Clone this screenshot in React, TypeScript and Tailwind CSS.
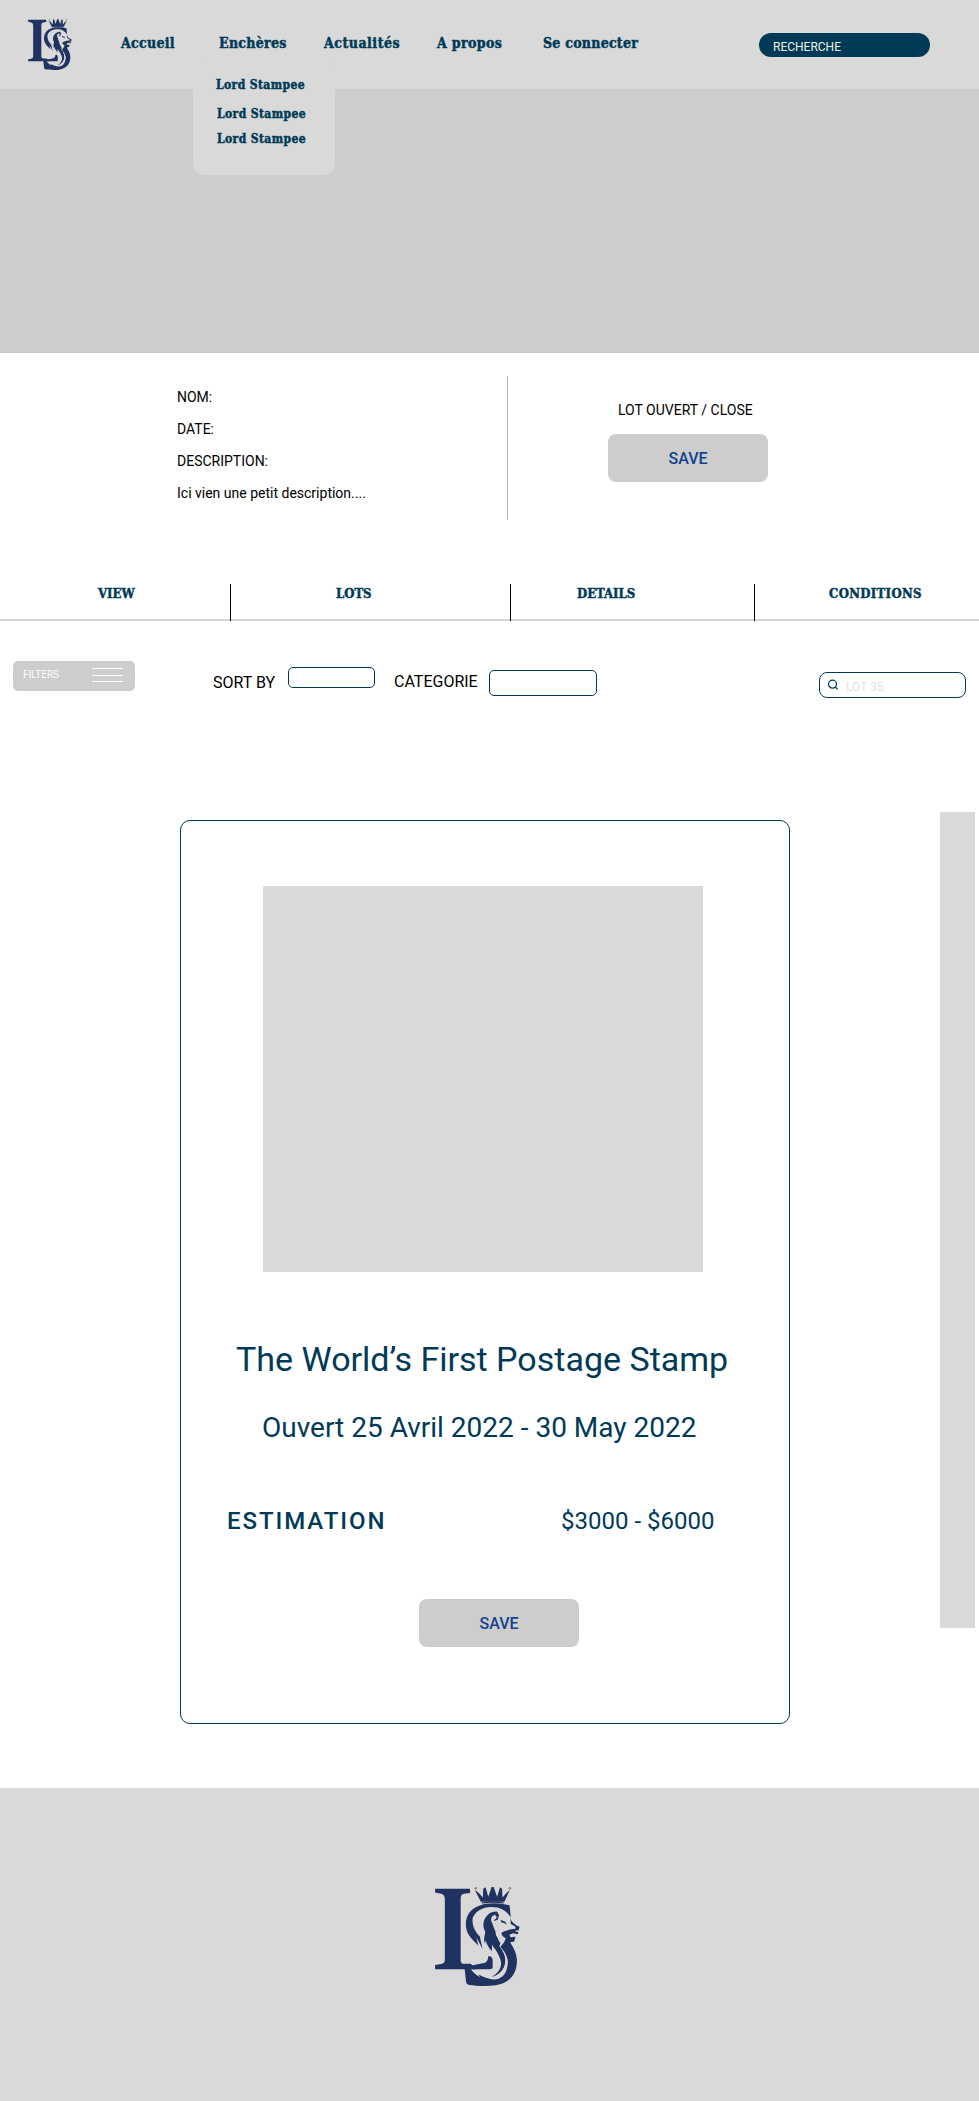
import React from "react";

const display =
  "font-['DejaVu_Serif_Condensed','DejaVu_Serif',serif] [font-stretch:condensed] font-bold text-[#003a57] whitespace-nowrap [-webkit-text-stroke:0.45px_#003a57]";

function Logo({ className }: { className: string }) {
  return (
    <svg viewBox="0 0 252 294" className={className} aria-label="Lord Stampee">
      <g fill="#20325f">
        <path d="M0 5H102Q104 5 104 8V18L86 20Q76 21 76 34V218Q76 228 86 228H106Q116 241 126 244H0V232L18 229Q29 227 29 216V36Q29 23 18 20L0 16Z" />
        <path d="M118 9L130 18L142 31L143 5L150 1L158 29L168 0H174L184 29L193 1L199 5L200 31L212 18L222 9L206 44H136Z" />
        <path d="M138 46Q171 39 204 46V49Q171 44 138 49Z" />
        <path d="M225 90L221 54L205 51C160 43 120 52 102 76C87 97 88 128 104 148C112 159 121 166 128 174L123 150L141 184L133 147C119 133 108 113 112 91C122 67 150 54 186 61C203 66 216 76 225 90Z" />
        <path d="M145 101C151 85 164 72 184 73L190 84L186 97L175 101L179 82C165 87 164 98 170 108C174 124 181 130 181 144C187 150 188 160 194 166L191 177C210 199 214 219 204 239C195 257 181 263 169 267C191 253 199 236 195 219C190 202 181 187 174 180L170 171L168 191C158 177 153 170 150 158L148 168C143 154 148 145 149 133C143 122 142 113 145 101Z" />
        <path d="M195 98L209 103L213 112L205 107L196 105Z" />
        <path d="M223 85C224 103 232 107 242 114L251 118L248 129H238L240 133L247 134L246 140L232 137L221 142L224 149L239 148L235 162L223 164C229 176 242 191 243 217C244 257 222 286 180 292C154 295 122 294 99 290C92 288 92 281 91 272L88 245C82 236 90 230 101 231C107 250 118 259 134 268L129 260C151 272 169 277 187 273C208 266 216 246 215 223C214 202 205 189 194 178L205 164L210 153C198 146 193 137 202 133L222 126L239 124L238 117L225 110Z" />
        <path d="M158 206Q170 204 171 218V241Q164 245 157 244H109Q106 238 106 234Q126 230 146 226Q157 223 158 206Z" />
      </g>
      <g fill="#d9d9d9">
        <path d="M170 94C172 83 180 83 183 89L181 94L174 98Z" />
        <path d="M190 259Q213 241 208 211Q206 196 199 188Q228 218 208 246Q201 257 190 259Z" />
      </g>
      <g fill="#b98c5b">
        <circle cx="121" cy="4" r="4" />
        <circle cx="222" cy="4" r="4" />
      </g>
    </svg>
  );
}

function Header() {
  return (
    <header className="relative z-10 flex h-[89px] items-start bg-[#d9d9d9]">
      <Logo className="ml-7 mt-[19px] h-[51px] w-[44px] shrink-0" />
      <nav className={`${display} flex pt-[31px] text-[14px] leading-6`}>
        <a className="ml-[49px] w-[98px] tracking-[0.3px]">Accueil</a>
        <a className="w-[105px] tracking-[0.3px]">Enchères</a>
        <a className="w-[113px] tracking-[0.5px]">Actualités</a>
        <a className="w-[106px] tracking-[0.35px]">A propos</a>
        <a className="w-[110px] tracking-[0.25px]">Se connecter</a>
      </nav>
      <div className="ml-[106px] mt-[33px] flex h-[24px] w-[171px] items-center rounded-full bg-[#003a57] pl-[14px] pt-[3px] text-[12px] text-[#f3f0e2]">
        RECHERCHE
      </div>
      <div
        className={`${display} absolute left-[193px] top-[60px] h-[115px] w-[142px] rounded-[10px] bg-[#d9d9d9] pl-[23px] pt-[15px] text-[12px] leading-[20px] tracking-[0.4px]`}
      >
        <p className="h-[29px]">Lord Stampee</p>
        <p className="h-[25px] pl-px">Lord Stampee</p>
        <p className="pl-px">Lord Stampee</p>
      </div>
    </header>
  );
}

function SaveButton({ className }: { className: string }) {
  return (
    <button
      className={`${className} h-[48px] w-[160px] rounded-lg bg-[#cdcdcd] pt-[2px] text-[16px] font-medium text-[#12438c]`}
    >
      SAVE
    </button>
  );
}

function LotSummary() {
  return (
    <section className="flex h-[231px] pt-[23px]">
      <div className="flex h-[144px] w-[508px] flex-col border-r border-[#b5b5b5] pl-[177px] pt-[5px] text-[14px] leading-8 text-black">
        <p>NOM:</p>
        <p>DATE:</p>
        <p>DESCRIPTION:</p>
        <p>Ici vien une petit description....</p>
      </div>
      <div className="ml-[100px] flex w-[160px] flex-col pt-[23px]">
        <p className="ml-[10px] whitespace-nowrap text-[14px] leading-[22px] text-black">LOT OUVERT / CLOSE</p>
        <SaveButton className="mt-[13px]" />
      </div>
    </section>
  );
}

function Tabs() {
  return (
    <nav className={`${display} flex h-[37px] border-b-2 border-[#d6d6d6] text-[13px] leading-[20px]`}>
      <a className="-mb-0.5 w-[231px] border-r border-black pl-[98px]">VIEW</a>
      <a className="-mb-0.5 w-[280px] border-r border-black pl-[105px]">LOTS</a>
      <a className="-mb-0.5 w-[244px] border-r border-black pl-[66px]">DETAILS</a>
      <a className="pl-[74px] tracking-[0.35px]">CONDITIONS</a>
    </nav>
  );
}

function Toolbar() {
  return (
    <div className="flex h-[192px] items-start pt-[40px] text-[16px] leading-5 text-black">
      <button className="ml-[13px] flex h-[30px] w-[122px] items-start rounded-[5px] bg-[#cdcdcd] pl-[10px] text-[10px] leading-[27px] text-white">
        <span className="w-[69px] text-left">FILTERS</span>
        <span className="flex flex-col gap-[5.5px] pt-[7px]">
          <span className="h-px w-[31px] bg-white" />
          <span className="h-px w-[31px] bg-white" />
          <span className="h-px w-[31px] bg-white" />
        </span>
      </button>
      <label className="ml-[78px] mt-[12px] w-[75px]">SORT BY</label>
      <div className="mt-[6px] h-[21px] w-[87px] rounded-[5px] border border-[#003a57]" />
      <label className="ml-[19px] mt-[11px] w-[95px]">CATEGORIE</label>
      <div className="mt-[9px] h-[26px] w-[108px] rounded-[5px] border border-[#003a57]" />
      <div className="ml-[222px] mt-[11px] flex h-[26px] w-[147px] items-center rounded-[8px] border border-[#003a57] pl-[7px] text-[12px] text-[#e2e2e2]">
        <svg viewBox="0 0 12 12" className="h-3 w-3" fill="none" stroke="#003a57" strokeWidth="1.2">
          <circle cx="5.5" cy="5.2" r="4" />
          <path d="M8.5 8.2L10.8 10.4" />
        </svg>
        <span className="ml-[7px] pt-[3px]">LOT 35</span>
      </div>
    </div>
  );
}

function LotCard() {
  return (
    <article className="mt-[7px] flex h-[904px] w-[610px] flex-col rounded-[10px] border border-[#003a57] text-[#003a57]">
      <div className="ml-[82px] mt-[65px] h-[386px] w-[440px] bg-[#d9d9d9]" />
      <h1 className="ml-[55px] mt-[65px] whitespace-nowrap text-[34px] leading-[44px]">
        The World’s First Postage Stamp
      </h1>
      <p className="ml-[81px] mt-[29px] whitespace-nowrap text-[28px] leading-[36px]">
        Ouvert 25 Avril 2022 - 30 May 2022
      </p>
      <div className="mt-[59px] flex text-[24px] leading-8">
        <span className="ml-[46px] w-[334px] font-medium tracking-[1.92px]">ESTIMATION</span>
        <span>$3000 - $6000</span>
      </div>
      <SaveButton className="ml-[238px] mt-[62px]" />
    </article>
  );
}

export default function App() {
  return (
    <div className="flex h-[2101px] w-[979px] flex-col overflow-hidden bg-white font-['Roboto',sans-serif]">
      <Header />
      <div className="h-[264px] bg-[#cdcdcd]" />
      <LotSummary />
      <Tabs />
      <Toolbar />
      <main className="flex h-[975px] items-start pl-[180px]">
        <LotCard />
        <div className="ml-[150px] mt-[-1px] h-[816px] w-[35px] bg-[#d9d9d9]" />
      </main>
      <footer className="flex flex-1 justify-center bg-[#d9d9d9] pt-[99px]">
        <Logo className="mr-[25px] h-[99px] w-[85px]" />
      </footer>
    </div>
  );
}
